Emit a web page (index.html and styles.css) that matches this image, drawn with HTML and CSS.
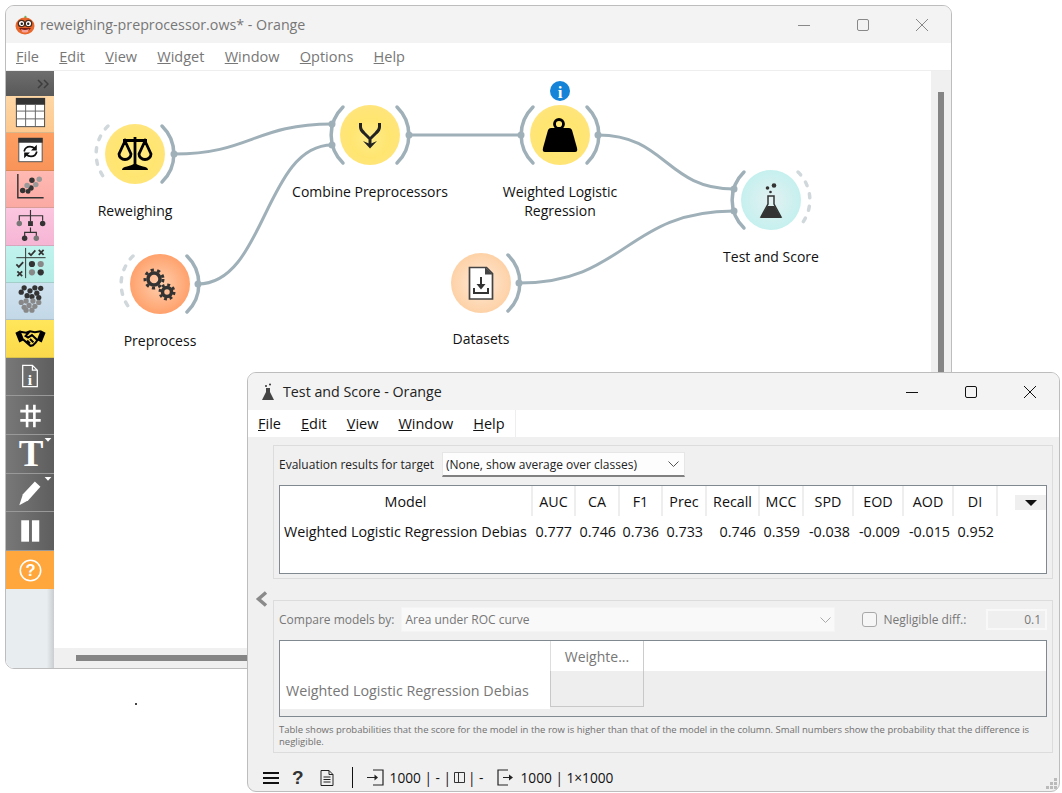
FILE: index.html
```html
<!DOCTYPE html>
<html lang="en">

<head>
    <meta charset="UTF-8">
    <title>reweighing-preprocessor.ows* - Orange</title>
    <link rel="stylesheet" href="styles.css">
</head>

<body>

    <div class="desktop">
        <span class="stray-dot"></span>

        <!-- canvas window, inactive, behind -->
        <div class="window canvas-window">
            <div class="titlebar">
                <svg class="app-logo" width="20" height="20" viewBox="0 0 20 20">
                    <path d="M9 2.5l1-2 2 1.500-1.500 1.500z" fill="#5cb85c"/>
                    <ellipse cx="10" cy="11" rx="9.500" ry="8.500" fill="#e8672c"/>
                    <path d="M4 13q6 8 12 0z" fill="#7a1d10"/>
                    <path d="M6 14q4 2 8 0l-1 3q-3 1-6 0z" fill="#f4a29a"/>
                    <circle cx="6.500" cy="8.500" r="3.200" fill="#fff" stroke="#4a2a1a" stroke-width="1.300"/>
                    <circle cx="13.500" cy="8.500" r="3.200" fill="#fff" stroke="#4a2a1a" stroke-width="1.300"/>
                    <circle cx="6.800" cy="8.800" r="1.200" fill="#222"/>
                    <circle cx="13.200" cy="8.800" r="1.200" fill="#222"/>
                </svg>
                <span class="title-text">reweighing-preprocessor.ows* - Orange</span>
                <div class="win-buttons">
                    <svg width="12" height="12" viewBox="0 0 12 12"><path d="M0 6.500h12"/></svg>
                    <svg width="12" height="12" viewBox="0 0 12 12"><rect x="0.500" y="0.500" width="11" height="11" rx="1.500"/></svg>
                    <svg width="12" height="12" viewBox="0 0 12 12"><path d="M0 0l12 12M12 0L0 12"/></svg>
                </div>
            </div>
            <div class="menubar">
                <span><u>F</u>ile</span>
                <span><u>E</u>dit</span>
                <span><u>V</u>iew</span>
                <span><u>W</u>idget</span>
                <span><u>W</u>indow</span>
                <span><u>O</u>ptions</span>
                <span><u>H</u>elp</span>
            </div>
            <div class="canvas-body">
                <div class="toolbox">
                    <div class="tool-head">
                        <svg width="12" height="10" viewBox="0 0 12 10"><path d="M1 1l4 4-4 4M7 1l4 4-4 4" fill="none" stroke="#3d3d3d" stroke-width="1.500"/></svg>
                    </div>

                    <div class="tool tool-data">
                        <svg viewBox="0 0 48 37">
                            <rect x="10" y="2.500" width="29" height="29" fill="#fff" stroke="#4a4a4a"/>
                            <rect x="9.500" y="2" width="30" height="7" fill="#333"/>
                            <path d="M10 15.500h29M10 23.500h29M19.500 9v22M29.500 9v22" stroke="#666" fill="none"/>
                        </svg>
                    </div>
                    <div class="tool tool-transform">
                        <svg viewBox="0 0 48 37">
                            <rect x="12.500" y="5.500" width="24" height="24" fill="#fff" stroke="#555"/>
                            <rect x="12" y="5" width="25" height="5" fill="#333"/>
                            <path d="M18 19q1-5 6-5 3 0 5 2M31 19q-1 5-6 5-3 0-5-2" fill="none" stroke="#111" stroke-width="1.700"/>
                            <path d="M31 12v6h-6zM18 26v-6h6z" fill="#111"/>
                        </svg>
                    </div>
                    <div class="tool tool-visualize">
                        <svg viewBox="0 0 48 37">
                            <path d="M11.500 3v24.500H38" fill="none" stroke="#333" stroke-width="1.500"/>
                            <circle cx="33.500" cy="8.500" r="2.800" fill="#999"/>
                            <circle cx="26" cy="9.500" r="2.800" fill="#333"/>
                            <circle cx="30" cy="14" r="2.800" fill="#999"/>
                            <circle cx="25" cy="17.500" r="2.800" fill="#333"/>
                            <circle cx="21" cy="15" r="2.800" fill="#999"/>
                            <circle cx="16.500" cy="20" r="2.800" fill="#333"/>
                            <circle cx="22" cy="21" r="2.500" fill="#333"/>
                        </svg>
                    </div>
                    <div class="tool tool-model">
                        <svg viewBox="0 0 48 37">
                            <path d="M24.500 2v12M13 13V8h24v5M24.500 20v5M18.500 29v-4h12v4" fill="none" stroke="#333" stroke-width="1.200"/>
                            <circle cx="13" cy="16" r="2.800" fill="#777"/>
                            <rect x="22" y="13.500" width="5" height="5" fill="#333"/>
                            <circle cx="37" cy="16" r="2.800" fill="#333"/>
                            <circle cx="18.500" cy="31" r="2.800" fill="#333"/>
                            <circle cx="30.500" cy="31" r="2.800" fill="#777"/>
                        </svg>
                    </div>
                    <div class="tool tool-evaluate">
                        <svg viewBox="0 0 48 37">
                            <path d="M10 12h30M19.500 2v31" stroke="#333" fill="none"/>
                            <path d="M22.500 7l2.500 2.500 4.500-5" fill="none" stroke="#333" stroke-width="1.800"/>
                            <path d="M33 4l5 5M38 4l-5 5" fill="none" stroke="#333" stroke-width="1.800"/>
                            <path d="M10 19l2.500 2.500 4.500-5" fill="none" stroke="#333" stroke-width="1.800"/>
                            <path d="M11 26l5 5M16 26l-5 5" fill="none" stroke="#333" stroke-width="1.800"/>
                            <circle cx="26" cy="18.500" r="3.200" fill="#333"/>
                            <circle cx="35" cy="18.500" r="3.200" fill="#888"/>
                            <circle cx="26" cy="27" r="3.200" fill="#888"/>
                            <circle cx="35" cy="27" r="3.200" fill="#333"/>
                        </svg>
                    </div>
                    <div class="tool tool-unsupervised">
                        <svg viewBox="0 0 48 37">
                            <g fill="#333">
                                <circle cx="18" cy="5" r="2.700"/><circle cx="29" cy="5" r="2.700"/><circle cx="35" cy="5.500" r="2.700"/>
                                <circle cx="24" cy="8" r="2.700"/><circle cx="15" cy="9.500" r="2.700"/><circle cx="31" cy="10.500" r="2.700"/>
                                <circle cx="21" cy="13" r="2.700"/><circle cx="26" cy="14" r="2.700"/><circle cx="33" cy="15" r="2.700"/>
                            </g>
                            <g fill="#888">
                                <circle cx="15" cy="20" r="2.700"/><circle cx="20" cy="18.500" r="2.700"/><circle cx="27" cy="18.500" r="2.700"/>
                                <circle cx="33" cy="20" r="2.700"/><circle cx="23" cy="23" r="2.700"/><circle cx="29" cy="24" r="2.700"/>
                                <circle cx="18" cy="25" r="2.700"/><circle cx="26" cy="28" r="2.700"/><circle cx="20" cy="28" r="2.700"/>
                            </g>
                        </svg>
                    </div>
                    <div class="tool tool-fairness">
                        <svg viewBox="0 0 48 37">
                            <path d="M9 13l5-2.500 4 10-5 2.500zM40 13l-5-2.500-4 10 5 2.500z" fill="#000"/>
                            <path d="M14 12l6 1 4-1.500 5 1 6-1M17 20l4 3.500 3.500 3 2.500-.5 3-3 2-3M24 11.500l-4.500 5 2.500 1.500 4-2.500 6 5.500M21 21l3 3M24 19.500l3.500 3.500" fill="none" stroke="#000" stroke-width="2.100"/>
                        </svg>
                    </div>
                    <div class="tool tool-gray">
                        <svg viewBox="0 0 48 37">
                            <path d="M16.500 7.500h10l5 5v17h-15zM26.500 7.500v5h5" fill="none" stroke="#fff" stroke-width="1.300"/>
                            <text class="icon-serif" x="24" y="28" font-size="16" text-anchor="middle">i</text>
                        </svg>
                    </div>
                    <div class="tool tool-gray">
                        <svg viewBox="0 0 48 37">
                            <path d="M21 9v23M28.500 9v23M14 15.500h21M14 25h21" fill="none" stroke="#fff" stroke-width="2.700"/>
                        </svg>
                    </div>
                    <div class="tool tool-gray">
                        <svg class="glyph-tool" viewBox="0 0 48 37">
                            <text class="icon-serif" x="25" y="32" font-size="38" text-anchor="middle">T</text>
                            <path d="M39 3h7l-3.500 4z" fill="#fff"/>
                        </svg>
                    </div>
                    <div class="tool tool-gray">
                        <svg viewBox="0 0 48 37">
                            <path d="M29 7.700L34.700 13 22.300 27 13 32 16.700 20.700Z" fill="#fff"/>
                            <path d="M39 3h7l-3.500 4z" fill="#fff"/>
                        </svg>
                    </div>
                    <div class="tool tool-gray">
                        <svg viewBox="0 0 48 37">
                            <rect x="15" y="8.500" width="8" height="22" fill="#fff"/>
                            <rect x="26" y="8.500" width="7.500" height="22" fill="#fff"/>
                        </svg>
                    </div>
                    <div class="tool tool-help">
                        <svg viewBox="0 0 48 37">
                            <circle cx="24.500" cy="20" r="10.500" fill="none" stroke="#fff" stroke-width="1.600"/>
                            <text class="icon-sans" x="24.500" y="26" font-size="17" text-anchor="middle">?</text>
                        </svg>
                    </div>
                </div>

                <div class="canvas-col">
                    <div class="canvas-row">
                        <div class="canvas">
                            <svg class="workflow" width="877" height="577" viewBox="54 71 877 577">
                                <defs>
                                    <radialGradient id="g-yellow" cx="50%" cy="55%" r="55%">
                                        <stop offset="0" stop-color="#ffec8a"/>
                                        <stop offset="0.6" stop-color="#ffe570"/>
                                        <stop offset="1" stop-color="#ffe57c"/>
                                    </radialGradient>
                                    <radialGradient id="g-orange" cx="50%" cy="50%" r="55%">
                                        <stop offset="0" stop-color="#ffcfae"/>
                                        <stop offset="1" stop-color="#ff9d66"/>
                                    </radialGradient>
                                    <radialGradient id="g-peach" cx="50%" cy="50%" r="55%">
                                        <stop offset="0" stop-color="#ffe9d6"/>
                                        <stop offset="1" stop-color="#fdcfa2"/>
                                    </radialGradient>
                                    <radialGradient id="g-cyan" cx="50%" cy="50%" r="55%">
                                        <stop offset="0" stop-color="#e4f1f2"/>
                                        <stop offset="1" stop-color="#c2f0ee"/>
                                    </radialGradient>
                                    <path id="arc-out" d="M27 -28A39 39 0 0 1 27 28"/>
                                    <path id="arc-in" d="M-27 -28A39 39 0 0 0 -27 28"/>
                                </defs>

                                <!-- links -->
                                <g class="links">
                                    <path d="M174 154C250 154 255 124 332 124"/>
                                    <path d="M198 284C265 284 265 145 332 145"/>
                                    <path d="M409 135H520"/>
                                    <path d="M598 135C666 135 666 189 734 189"/>
                                    <path d="M519 283C626 283 626 211 734 211"/>
                                </g>

                                <!-- Reweighing -->
                                <g transform="translate(135 154)">
                                    <use href="#arc-in" class="arc-idle"/>
                                    <use href="#arc-out" class="arc"/>
                                    <circle class="anchor" cx="39" cy="0" r="3.500"/>
                                    <circle r="30" fill="url(#g-yellow)"/>
                                    <path d="M0 -17V13M-12 -13.500H12" stroke="#000" stroke-width="2.800" fill="none"/>
                                    <path d="M-13 16q0-3 5-3.500 4-1 8-3 4 2 8 3 5 .5 5 3.500z" fill="#000"/>
                                    <path d="M-10 -13L-16 0A6 5.500 0 0 0 -4 0ZM10 -13L4 0A6 5.500 0 0 0 16 0Z" fill="none" stroke="#000" stroke-width="2.800"/>
                                </g>

                                <!-- Preprocess -->
                                <g transform="translate(160 284)">
                                    <use href="#arc-in" class="arc-idle"/>
                                    <use href="#arc-out" class="arc"/>
                                    <circle class="anchor" cx="38" cy="0" r="3.500"/>
                                    <circle r="30" fill="url(#g-orange)"/>
                                    <circle class="gear-teeth" cx="-6" cy="-5" r="9" stroke-dasharray="3.200 3.270"/>
                                    <circle class="gear-ring" cx="-6" cy="-5" r="6"/>
                                    <circle class="gear-teeth" cx="7" cy="8" r="7" stroke-dasharray="2.800 2.700"/>
                                    <circle class="gear-ring" cx="7" cy="8" r="4.500"/>
                                </g>

                                <!-- Combine Preprocessors -->
                                <g transform="translate(370 135)">
                                    <use href="#arc-in" class="arc"/>
                                    <use href="#arc-out" class="arc"/>
                                    <circle class="anchor" cx="-38" cy="-11" r="3.500"/>
                                    <circle class="anchor" cx="-38" cy="10" r="3.500"/>
                                    <circle class="anchor" cx="39" cy="0" r="3.500"/>
                                    <circle r="30" fill="url(#g-yellow)"/>
                                    <path d="M-9.500 -12V-8Q-9.500 -5 -6 -2L0 4 6 -2Q9.500 -5 9.500 -8V-12M0 3V9" fill="none" stroke="#222" stroke-width="3"/>
                                    <path d="M-7 6L0 9 7 6 0 13.500z" fill="#222"/>
                                </g>

                                <!-- Weighted Logistic Regression -->
                                <g transform="translate(560 135)">
                                    <use href="#arc-in" class="arc"/>
                                    <use href="#arc-out" class="arc"/>
                                    <circle class="anchor" cx="-39" cy="0" r="3.500"/>
                                    <circle class="anchor" cx="38" cy="0" r="3.500"/>
                                    <circle r="30" fill="url(#g-yellow)"/>
                                    <circle cx="-1" cy="-11" r="4.500" fill="none" stroke="#000" stroke-width="2.800"/>
                                    <path d="M-9 -7H9Q11 -7 12 -5L17 13Q18 17 15 17H-15Q-18 17 -17 13L-12 -5Q-11 -7 -9 -7Z" fill="#000"/>
                                </g>
                                <g transform="translate(560 91)">
                                    <circle r="10" fill="#1584d8"/>
                                    <text class="badge-text" x="0" y="6.500" text-anchor="middle">i</text>
                                </g>

                                <!-- Datasets -->
                                <g transform="translate(481 283)">
                                    <use href="#arc-out" class="arc"/>
                                    <circle class="anchor" cx="38" cy="0" r="3.500"/>
                                    <circle r="30" fill="url(#g-peach)"/>
                                    <path d="M-11.500 -15.500H5.500L11.500 -9.500V16H-11.500Z" fill="#fff" stroke="#444" stroke-width="1.700"/>
                                    <path d="M4 -16V-8.500H12Z" fill="#444"/>
                                    <path d="M0 -6V4M-7 5V10H7V5" fill="none" stroke="#333" stroke-width="2"/>
                                    <path d="M-4.500 1H4.500L0 6.500Z" fill="#333"/>
                                </g>

                                <!-- Test and Score -->
                                <g transform="translate(771 200)">
                                    <use href="#arc-in" class="arc"/>
                                    <use href="#arc-out" class="arc-idle"/>
                                    <circle class="anchor" cx="-37" cy="-11" r="3.500"/>
                                    <circle class="anchor" cx="-37" cy="11" r="3.500"/>
                                    <circle r="30" fill="url(#g-cyan)"/>
                                    <circle cx="3" cy="-14.500" r="2.300" fill="#333"/>
                                    <circle cx="-3.500" cy="-12" r="1.800" fill="#333"/>
                                    <circle cx="-0.500" cy="-8" r="1.300" fill="#333"/>
                                    <path d="M-3 -4H3V4L10 17H-10L-3 4Z" fill="none" stroke="#333" stroke-width="1.500"/>
                                    <path d="M-3.500 6H3.500L10.500 18H-10.500Z" fill="#333"/>
                                </g>

                                <!-- titles -->
                                <g class="node-label">
                                    <text x="135" y="216" text-anchor="middle">Reweighing</text>
                                    <text x="160" y="346" text-anchor="middle">Preprocess</text>
                                    <text x="370" y="197" text-anchor="middle">Combine Preprocessors</text>
                                    <text x="560" y="197" text-anchor="middle">Weighted Logistic</text>
                                    <text x="560" y="216" text-anchor="middle">Regression</text>
                                    <text x="481" y="344" text-anchor="middle">Datasets</text>
                                    <text x="771" y="262" text-anchor="middle">Test and Score</text>
                                </g>
                            </svg>
                        </div>
                        <div class="vscroll"><span class="vthumb"></span></div>
                    </div>
                    <div class="hscroll"><span class="hthumb"></span></div>
                </div>
            </div>
        </div>

        <!-- widget window -->
        <div class="window widget-window">
            <div class="titlebar">
                <svg class="flask-small" width="12" height="18" viewBox="0 0 12 18">
                    <circle cx="8" cy="1.500" r="1" fill="#333"/>
                    <circle cx="4" cy="3" r="1" fill="#333"/>
                    <path d="M4 5h4v4l4 8H0l4-8z" fill="#444"/>
                </svg>
                <span class="title-text">Test and Score - Orange</span>
                <div class="win-buttons">
                    <svg width="12" height="12" viewBox="0 0 12 12"><path d="M0 6.500h12"/></svg>
                    <svg width="12" height="12" viewBox="0 0 12 12"><rect x="0.500" y="0.500" width="11" height="11" rx="1.500"/></svg>
                    <svg width="12" height="12" viewBox="0 0 12 12"><path d="M0 0l12 12M12 0L0 12"/></svg>
                </div>
            </div>
            <div class="menubar widget-menu">
                <div class="widget-menu-items">
                    <span><u>F</u>ile</span>
                    <span><u>E</u>dit</span>
                    <span><u>V</u>iew</span>
                    <span><u>W</u>indow</span>
                    <span><u>H</u>elp</span>
                </div>
            </div>

            <div class="widget-main">
                <div class="collapse-col">
                    <svg width="14" height="16" viewBox="0 0 14 16"><path d="M11 1.500L3.500 8l7.500 6.500" fill="none" stroke="#8a8a8a" stroke-width="3.500"/></svg>
                </div>
                <div class="boxes">
                    <section class="box box-eval">
                        <div class="box-row">
                            <span class="row-label">Evaluation results for target</span>
                            <div class="combo combo-target">
                                <span>(None, show average over classes)</span>
                                <svg width="11" height="6" viewBox="0 0 11 6"><path d="M.5 .5l5 5 5-5" fill="none" stroke="#555"/></svg>
                            </div>
                        </div>
                        <div class="table-frame score-frame">
                            <table class="scores">
                                <thead>
                                    <tr>
                                        <th class="col-model">Model</th>
                                        <th class="col-auc">AUC</th>
                                        <th class="col-ca">CA</th>
                                        <th class="col-f1">F1</th>
                                        <th class="col-prec">Prec</th>
                                        <th class="col-recall">Recall</th>
                                        <th class="col-mcc">MCC</th>
                                        <th class="col-spd">SPD</th>
                                        <th class="col-eod">EOD</th>
                                        <th class="col-aod">AOD</th>
                                        <th class="col-di">DI</th>
                                        <th class="col-rest"><span class="header-menu"><svg width="12" height="6" viewBox="0 0 12 6"><path d="M0 0h12L6 6z" fill="#111"/></svg></span></th>
                                    </tr>
                                </thead>
                                <tbody>
                                    <tr>
                                        <td class="model-name">Weighted Logistic Regression Debias</td>
                                        <td>0.777</td>
                                        <td>0.746</td>
                                        <td>0.736</td>
                                        <td>0.733</td>
                                        <td>0.746</td>
                                        <td>0.359</td>
                                        <td>-0.038</td>
                                        <td>-0.009</td>
                                        <td>-0.015</td>
                                        <td>0.952</td>
                                        <td></td>
                                    </tr>
                                </tbody>
                            </table>
                        </div>
                    </section>

                    <section class="box box-compare">
                        <div class="box-row">
                            <span class="row-label">Compare models by:</span>
                            <div class="combo combo-compare">
                                <span>Area under ROC curve</span>
                                <svg width="11" height="6" viewBox="0 0 11 6"><path d="M.5 .5l5 5 5-5" fill="none" stroke="#aaa"/></svg>
                            </div>
                            <span class="checkbox"></span>
                            <span class="row-label">Negligible diff.:</span>
                            <span class="spin-input">0.1</span>
                        </div>
                        <div class="table-frame compare-frame">
                            <div class="compare-names">
                                <div class="compare-spacer"></div>
                                <div class="compare-name">Weighted Logistic Regression Debias</div>
                            </div>
                            <div class="compare-grid">
                                <div class="compare-head"><span>Weighte...</span></div>
                                <div class="compare-cell"></div>
                            </div>
                        </div>
                        <p class="note">Table shows probabilities that the score for the model in the row is higher than that of the model in the column. Small numbers show the probability that the difference is negligible.</p>
                    </section>
                </div>
            </div>

            <div class="statusbar">
                <svg width="16" height="14" viewBox="0 0 16 14"><path d="M0 2h16M0 7h16M0 12h16" stroke="#111" stroke-width="2.200"/></svg>
                <span class="status-help">?</span>
                <svg width="14" height="16" viewBox="0 0 14 16"><path d="M1 .5h8l4 4v11H1zM9 .5v4h4M3.500 7h7M3.500 9.500h7M3.500 12h7" fill="none" stroke="#222"/></svg>
                <span class="status-sep"></span>
                <svg class="status-io" width="17" height="17" viewBox="0 0 17 17"><path d="M6 1h10v15H6M0 8.500h9" fill="none" stroke="#222" stroke-width="1.200"/><path d="M7.500 5.500L11 8.500l-3.500 3z" fill="#222"/></svg>
                <span class="status-text">1000 | - |</span>
                <svg class="status-mini" width="11" height="11" viewBox="0 0 11 11"><path d="M.5 .5h10v10H.5zM4.500 .5v10" fill="none" stroke="#333"/></svg>
                <span class="status-text">| -</span>
                <svg class="status-out" width="17" height="17" viewBox="0 0 17 17"><path d="M11 1H1v15h10M6 8.500h6" fill="none" stroke="#222" stroke-width="1.200"/><path d="M12 5.500l4 3-4 3z" fill="#222"/></svg>
                <span class="status-text">1000 | 1×1000</span>
                <svg class="grip" width="11" height="11" viewBox="0 0 11 11"><path d="M8 0h3v3H8zM4 4h3v3H4zM8 4h3v3H8zM0 8h3v3H0zM4 8h3v3H4zM8 8h3v3H8z" fill="#bbb"/></svg>
            </div>
        </div>
    </div>

</body>

</html>
```

FILE: styles.css
```css
body {
    font-family: 'Open Sans', 'Noto Sans', sans-serif;
    font-size: 14px;
    background-color: #fff;
    margin: 0;
    padding: 0;
}

.desktop {
    position: relative;
    width: 1062px;
    height: 793px;
    overflow: hidden;
    background-color: #fff;
}

.stray-dot {
    position: absolute;
    left: 135px;
    top: 703px;
    width: 2px;
    height: 2px;
    background-color: #444;
}

.window {
    position: absolute;
    display: flex;
    flex-direction: column;
    box-sizing: border-box;
    border: 1px solid #bdbdbd;
    border-radius: 9px;
    overflow: hidden;
    background-color: #f0f0f0;
}

.canvas-window {
    left: 5px;
    top: 5px;
    width: 947px;
    height: 664px;
}

.widget-window {
    left: 247px;
    top: 372px;
    width: 813px;
    height: 420px;
}

/* title bar */
.titlebar {
    flex: 0 0 37px;
    display: flex;
    align-items: center;
    background-color: #f3f3f3;
    padding-left: 9px;
}

.title-text {
    margin-left: 5px;
    font-size: 14.25px;
    color: #777;
}

.widget-window .title-text {
    margin-left: 9px;
    color: #222;
}

.flask-small {
    margin-left: 5px;
}

.win-buttons {
    margin-left: auto;
    display: flex;
    gap: 47px;
    padding-right: 23px;
}

.win-buttons svg {
    fill: none;
    stroke: #888;
    stroke-width: 1;
}

.widget-window .win-buttons svg {
    stroke: #111;
}

/* menus */
.menubar {
    flex: 0 0 28px;
    display: flex;
    align-items: center;
    gap: 20.3px;
    padding-left: 10px;
    background-color: #fff;
    color: #777;
    font-size: 14.5px;
    box-sizing: border-box;
    border-bottom: 1px solid #eee;
}

.widget-menu {
    flex-basis: 27px;
    border-bottom: none;
    padding-left: 0;
    color: #111;
}

.widget-menu-items {
    display: flex;
    align-items: center;
    gap: 20px;
    height: 100%;
    padding: 0 10px;
    border-right: 1px solid #eee;
}

.menubar u {
    text-decoration-thickness: 1px;
}

/* canvas window body */
.canvas-body {
    flex: 1;
    display: flex;
    min-height: 0;
    background-color: #fff;
}

.toolbox {
    flex: 0 0 48px;
    display: flex;
    flex-direction: column;
    background: linear-gradient(to right, #e8edf0 85%, #c9cdd0);
}

.tool-head {
    flex: 0 0 25px;
    display: flex;
    justify-content: flex-end;
    align-items: center;
    padding-right: 5px;
    box-sizing: border-box;
    background: linear-gradient(to bottom, #6e6e6e, #585858);
}

.tool {
    flex: 0 0 37.4px;
    min-height: 0;
    box-sizing: border-box;
    border-bottom: 1px solid rgba(0, 0, 0, 0.15);
}

.tool svg {
    display: block;
    width: 48px;
    height: 36px;
    overflow: visible;
}

.tool-data { background: linear-gradient(to bottom, #fed7a6, #fdc98f); }
.tool-transform { background: linear-gradient(to bottom, #ff9f62, #f8945a); }
.tool-visualize { background: linear-gradient(to bottom, #ffbab3, #fba9a3); }
.tool-model { background: linear-gradient(to bottom, #fcc6e0, #f5b5d4); }
.tool-evaluate { background: linear-gradient(to bottom, #c1f3ee, #b3ebe5); }
.tool-unsupervised { background: linear-gradient(to bottom, #cfe2ef, #c3d8e7); }
.tool-fairness { background: linear-gradient(to bottom, #ffe65a, #fbd94c); }

.tool-gray {
    flex-basis: 38.6px;
    background: linear-gradient(to right, #787878, #5e5e5e);
    border-bottom: 1px solid #999;
}

.tool-help {
    flex-basis: 38px;
    background-color: #ffa73d;
    border-bottom: none;
}

.icon-serif {
    font-family: 'Liberation Serif', serif;
    font-weight: bold;
    fill: #fff;
}

.icon-sans {
    font-family: 'Liberation Sans', sans-serif;
    font-weight: bold;
    fill: #fff;
}

.canvas-col {
    flex: 1;
    display: flex;
    flex-direction: column;
    min-width: 0;
}

.canvas-row {
    flex: 1;
    display: flex;
    min-height: 0;
}

.canvas {
    flex: 1;
    overflow: hidden;
}

.workflow {
    display: block;
}

.vscroll {
    flex: 0 0 20px;
    background-color: #f0f0f0;
    padding: 21px 0 0 7px;
    box-sizing: border-box;
}

.vthumb {
    display: block;
    width: 6px;
    height: 400px;
    background-color: #858585;
}

.hscroll {
    flex: 0 0 20px;
    background-color: #f0f0f0;
    padding: 7px 0 0 22px;
    box-sizing: border-box;
}

.hthumb {
    display: block;
    width: 400px;
    height: 6px;
    background-color: #858585;
}

/* workflow drawing */
.links path {
    fill: none;
    stroke: #9fb0b9;
    stroke-width: 3;
}

.arc {
    fill: none;
    stroke: #9fb0b9;
    stroke-width: 3.500;
    stroke-linecap: round;
}

.arc-idle {
    fill: none;
    stroke: #d0d8dc;
    stroke-width: 3.500;
    stroke-linecap: round;
    stroke-dasharray: 4 8.500;
}

.anchor {
    fill: #9fb0b9;
}

.gear-teeth {
    fill: none;
    stroke: #333;
    stroke-width: 3;
}

.gear-ring {
    fill: none;
    stroke: #333;
    stroke-width: 3.500;
}

.badge-text {
    font-family: 'Liberation Serif', serif;
    font-weight: bold;
    font-size: 17px;
    fill: #fff;
}

.node-label text {
    font-size: 14px;
    fill: #111;
}

/* widget window */
.widget-main {
    flex: 0 0 auto;
    display: flex;
    padding-top: 8px;
}

.collapse-col {
    flex: 0 0 25px;
    display: flex;
    align-items: center;
    justify-content: center;
    padding-left: 3px;
    box-sizing: border-box;
}

.boxes {
    flex: 1;
    display: flex;
    flex-direction: column;
    gap: 21px;
    padding-right: 6px;
    min-width: 0;
}

.box {
    box-sizing: border-box;
    border: 1px solid #dcdcdc;
    padding: 6px 5px 0;
    display: flex;
    flex-direction: column;
}

.box-eval {
    height: 134px;
}

.box-compare {
    height: 153px;
    color: #777;
}

.box-row {
    display: flex;
    align-items: center;
    flex: 0 0 25px;
}

.row-label {
    font-size: 12px;
}

.box-eval .row-label {
    color: #222;
}

.combo {
    display: flex;
    align-items: center;
    justify-content: space-between;
    box-sizing: border-box;
    height: 25px;
    padding: 0 5px 0 3px;
    font-size: 12px;
}

.combo-target {
    width: 243px;
    margin-left: 8px;
    background-color: #fdfdfd;
    border: 1px solid #e6e6e6;
    border-bottom: 2px solid #808080;
    color: #222;
}

.combo-compare {
    width: 434px;
    margin-left: 7px;
    background-color: #f9f9f9;
    border: 1px solid #f4f4f4;
    color: #777;
    padding-right: 3px;
}

.checkbox {
    width: 15px;
    height: 15px;
    box-sizing: border-box;
    margin: 0 6px 0 27px;
    border: 1px solid #a8a8a8;
    border-radius: 3px;
    background-color: #f6f6f6;
}

.spin-input {
    margin-left: auto;
    width: 61px;
    height: 21px;
    box-sizing: border-box;
    padding-right: 4px;
    border: 2px solid #f8f8f8;
    background-color: #efefef;
    text-align: right;
    font-size: 12px;
    line-height: 18px;
}

.table-frame {
    flex: 0 0 auto;
    box-sizing: border-box;
    border: 1px solid #808890;
    background-color: #fff;
}

.score-frame {
    height: 89px;
    margin-top: 8px;
}

.scores {
    table-layout: fixed;
    width: 766px;
    border-collapse: separate;
    border-spacing: 0;
    color: #111;
    font-size: 14.3px;
}

.scores th {
    box-sizing: border-box;
    height: 30px;
    padding: 0;
    font-weight: normal;
    text-align: center;
    border-right: 2px solid #eee;
}

.scores th:last-child {
    border-right: none;
    text-align: right;
}

.scores td {
    height: 31px;
    padding: 0 4px 0 0;
    text-align: right;
    white-space: nowrap;
}

.scores td.model-name {
    text-align: left;
    padding-left: 4px;
}

.col-model { width: 253px; }
.col-auc { width: 43px; }
.col-ca { width: 44px; }
.col-f1 { width: 43px; }
.col-prec { width: 44px; }
.col-recall { width: 53px; }
.col-mcc { width: 44px; }
.col-spd { width: 50px; }
.col-eod { width: 50px; }
.col-aod { width: 50px; }
.col-di { width: 44px; }
.col-rest { width: 48px; }

.header-menu {
    display: inline-flex;
    align-items: center;
    justify-content: center;
    width: 31px;
    height: 15px;
    background-color: #efefef;
    vertical-align: middle;
}

.compare-frame {
    display: flex;
    height: 77px;
    margin-top: 8px;
    background-color: #eee;
    border-color: #808890;
}

.compare-names {
    flex: 0 0 270px;
    height: 68px;
    display: flex;
    flex-direction: column;
    background-color: #fff;
}

.compare-spacer {
    flex: 1;
}

.compare-name {
    padding: 0 0 9px 6px;
    font-size: 14.3px;
    white-space: nowrap;
}

.compare-grid {
    flex: 1;
    display: flex;
    flex-direction: column;
    background: linear-gradient(to bottom, #fff 30px, #eee 30px);
}

.compare-head {
    width: 94px;
    height: 30px;
    box-sizing: border-box;
    display: flex;
    align-items: center;
    justify-content: center;
    border-left: 1px solid #ddd;
    border-right: 1px solid #ccc;
}

.compare-cell {
    width: 94px;
    height: 36px;
    box-sizing: border-box;
    border: 1px solid #c8c8c8;
    border-top: none;
}

.note {
    margin: 7px 0 0 0;
    font-size: 9.5px;
    line-height: 12px;
    color: #6f6f6f;
}

/* status bar */
.statusbar {
    flex: 1;
    display: flex;
    align-items: center;
    padding: 11px 0 0 15px;
    color: #111;
    position: relative;
}

.status-help {
    margin: 0 16px 0 13px;
    font-family: 'Liberation Sans', sans-serif;
    font-size: 19px;
    font-weight: bold;
    color: #333;
}

.status-sep {
    width: 1px;
    height: 21px;
    margin: 0 14px 0 18px;
    background-color: #111;
}

.status-text {
    font-size: 13.7px;
    white-space: nowrap;
}

.status-io {
    margin-right: 6px;
}

.status-mini {
    margin: 0 3px;
}

.status-out {
    margin: 0 7px 0 13px;
}

.grip {
    position: absolute;
    right: 2px;
    bottom: 2px;
}
```
